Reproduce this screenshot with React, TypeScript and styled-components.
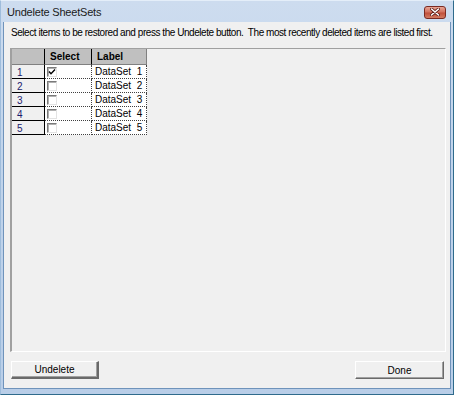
import React from 'react';
import styled, { createGlobalStyle } from 'styled-components';

const GlobalStyle = createGlobalStyle`
	html, body {
		margin: 0;
		padding: 0;
		background: #ffffff;
	}
	body {
		font-family: "Liberation Sans", Arial, sans-serif;
	}
`;

const Window = styled.div`
	width: 454px;
	height: 395px;
	box-sizing: border-box;
	display: flex;
	flex-direction: column;
	background: linear-gradient(to bottom, #cddcef 0%, #c1d4eb 40%, #b9cee8 100%);
	border-left: 1px solid #9fbddc;
	border-right: 1px solid #2f6b8c;
	border-bottom: 1px solid #2f6b8c;
	border-top: 1px solid #e4eef9;
`;

const TitleBar = styled.div`
	height: 21px;
	display: flex;
	align-items: center;
	justify-content: space-between;
	padding: 0 7px 0 6px;
`;

const Title = styled.span`
	font-family: "Liberation Sans", Arial, sans-serif;
	font-size: 11px;
	letter-spacing: -0.2px;
	color: #1a1a1a;
`;

const CloseButton = styled.div`
	width: 22px;
	height: 13px;
	box-sizing: border-box;
	border: 1px solid #7a2a22;
	border-radius: 3px;
	background: linear-gradient(to bottom, #e8a595 0%, #d2715f 45%, #c0503c 55%, #d27a62 100%);
	display: flex;
	align-items: center;
	justify-content: center;
	margin-top: 1px;
`;

const Client = styled.div`
	flex: 1;
	margin: 0 2px 5px 2px;
	border: 1px solid #6f93bb;
	border-top: none;
	background: #f0f0f0;
	display: flex;
	flex-direction: column;
	padding: 5px 4px 9px 6px;
`;

const Instructions = styled.div`
	font-size: 10px;
	line-height: 12px;
	letter-spacing: -0.45px;
	color: #000;
	padding-left: 1px;
	white-space: pre;
`;

const GridFrame = styled.div`
	margin-top: 9px;
	height: 304px;
	box-sizing: border-box;
	border-style: solid;
	border-width: 1px 1px 1px 2px;
	border-color: #a0a0a0 #ffffff #ffffff #a0a0a0;
	background: #f0f0f0;
`;

const Table = styled.div`
	display: grid;
	grid-template-columns: 33px 47px 55px;
	grid-template-rows: 16px;
	grid-auto-rows: 14px;
	width: max-content;
	font-size: 10px;
`;

const HeaderCell = styled.div<{ $last?: boolean }>`
	background: #c0c0c0;
	box-sizing: border-box;
	border-right: ${p => (p.$last ? '1px solid #808080' : '1px solid #000')};
	border-bottom: 1px solid #808080;
	font-weight: bold;
	padding: 2px 0 0 5px;
	color: #000;
`;

const RowHeader = styled.div`
	box-sizing: border-box;
	background: #f0f0f0;
	border-right: 1px solid #000;
	border-bottom: 1px solid #000;
	padding: 2px 0 0 5px;
	color: #1c1c6e;
`;

const DataCell = styled.div`
	box-sizing: border-box;
	background: #ffffff;
	border-right: 1px dotted #404040;
	border-bottom: 1px dotted #404040;
	padding: 1px 0 0 3px;
	white-space: pre;
	color: #000;
	display: flex;
	align-items: flex-start;
`;

const CheckBox = styled.div`
	width: 10px;
	height: 10px;
	box-sizing: border-box;
	margin: 1px 0 0 -1px;
	border-style: solid;
	border-width: 1px;
	border-color: #7a7a7a #e3e3e3 #e3e3e3 #7a7a7a;
	box-shadow: inset 1px 1px 0 #b0b0b0;
	background: #ffffff;
	display: flex;
	align-items: center;
	justify-content: center;
`;

const Footer = styled.div`
	margin-top: 9px;
	display: flex;
	justify-content: space-between;
	padding: 0 2px 0 1px;
`;

const Button = styled.button<{ $default?: boolean; $width: number }>`
	width: ${p => p.$width}px;
	height: 18px;
	box-sizing: border-box;
	padding: 0;
	background: #f0f0f0;
	font-family: "Liberation Sans", Arial, sans-serif;
	font-size: 10px;
	color: #000;
	border-style: solid;
	border-width: ${p => (p.$default ? '1px 2px 2px 1px' : '1px')};
	border-color: #ffffff #6a6a6a #6a6a6a #ffffff;
	box-shadow: inset -1px -1px 0 #a0a0a0;
	outline: none;
`;

const rows = [1, 2, 3, 4, 5];

const CloseGlyph = () => (
	<svg width="10" height="8" viewBox="0 0 10 8">
		<path d="M1.5 1 L8.5 7 M8.5 1 L1.5 7" stroke="#5a1a14" strokeWidth="3" strokeLinecap="round" />
		<path d="M1.5 1 L8.5 7 M8.5 1 L1.5 7" stroke="#ffffff" strokeWidth="1.6" strokeLinecap="round" />
	</svg>
);

const Check = () => (
	<svg width="8" height="8" viewBox="0 0 8 8">
		<path d="M1 3.5 L3 5.8 L7 1.5" stroke="#000" strokeWidth="1.4" fill="none" />
	</svg>
);

const App: React.FunctionComponent = () => {
	return (
		<>
			<GlobalStyle />
			<Window>
				<TitleBar>
					<Title>Undelete SheetSets</Title>
					<CloseButton><CloseGlyph /></CloseButton>
				</TitleBar>
				<Client>
					<Instructions>Select items to be restored and press the Undelete button.  The most recently deleted items are listed first.</Instructions>
					<GridFrame>
						<Table>
							<HeaderCell />
							<HeaderCell>Select</HeaderCell>
							<HeaderCell $last>Label</HeaderCell>
							{rows.map(n => (
								<React.Fragment key={n}>
									<RowHeader>{n}</RowHeader>
									<DataCell><CheckBox>{n === 1 && <Check />}</CheckBox></DataCell>
									<DataCell>{`DataSet  ${n}`}</DataCell>
								</React.Fragment>
							))}
						</Table>
					</GridFrame>
					<Footer>
						<Button $default $width={88}>Undelete</Button>
						<Button $width={89}>Done</Button>
					</Footer>
				</Client>
			</Window>
		</>
	);
};

export default App;
